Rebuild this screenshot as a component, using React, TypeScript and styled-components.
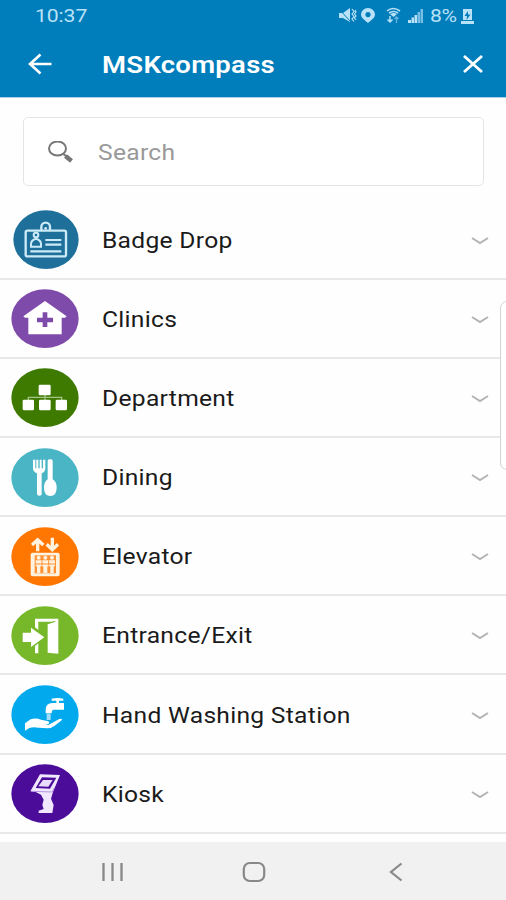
import React from "react";
import styled, { createGlobalStyle } from "styled-components";

const GlobalStyle = createGlobalStyle`
  * { box-sizing: border-box; }
  body { margin: 0; background: #fff; font-family: Roboto, "Liberation Sans", sans-serif; }
  svg { display: block; flex: none; }
`;

const Screen = styled.div`
  position: relative;
  width: 506px;
  height: 900px;
  display: flex;
  flex-direction: column;
  overflow: hidden;
  background: #fefefe;
`;

const Header = styled.header`
  height: 98px;
  flex: none;
  background: #007dbb;
  color: #fff;
  border-bottom: 1px solid #a9cfe5;
`;

const StatusBar = styled.div`
  height: 32px;
  display: flex;
  align-items: center;
  justify-content: space-between;
  padding: 0 32px 0 35px;
  color: #b9e2f8;
`;

const StatusIcons = styled.div`
  display: flex;
  align-items: center;
`;

const Label = styled.span<{ $size: number; $weight?: number; $spacing?: number; $color?: string }>`
  display: block;
  white-space: nowrap;
  transform: scaleX(1.145);
  transform-origin: left center;
  font-size: ${(p) => p.$size}px;
  line-height: 30px;
  font-weight: ${(p) => p.$weight ?? 400};
  letter-spacing: ${(p) => p.$spacing ?? 0}px;
  color: ${(p) => p.$color ?? "inherit"};
`;

const Battery = styled.div`
  width: 37px;
  padding-left: 6px;
`;

const TitleBar = styled.div`
  height: 65px;
  display: flex;
  align-items: center;
  padding: 0 22px 1px 27px;
`;

const Title = styled.h1`
  margin: 0 auto 0 50px;
  padding-top: 2px;
  font: inherit;
`;

const SearchBox = styled.div`
  height: 69px;
  margin: 19px 22px 0 23px;
  flex: none;
  display: flex;
  align-items: center;
  gap: 24px;
  padding: 2px 0 0 23px;
  border: 1.5px solid #e5e5e5;
  border-radius: 5px;
  background: #fff;
`;

const List = styled.ul`
  list-style: none;
  margin: 14.9px 0 0;
  padding: 0;
  flex: 1;
`;

const Row = styled.li`
  height: 79.1px;
  display: flex;
  align-items: center;
  padding: 1px 16px 0 11px;
  border-bottom: 2px solid #e8e8e8;
`;

const RowName = styled.div`
  flex: 1;
  margin-left: 22.5px;
  padding-top: 2px;
`;

const EdgeHandle = styled.div`
  position: absolute;
  right: -8px;
  top: 301px;
  width: 14px;
  height: 169px;
  border: 1.5px solid #d4d4d4;
  border-radius: 8px;
  background: #fefefe;
`;

const NavBar = styled.nav`
  height: 58px;
  flex: none;
  display: flex;
  align-items: center;
  padding: 2px 0 0 101px;
  gap: 118px;
  background: #f1f1f1;
`;

const Disc = ({ color, offset = 0, children }: { color: string; offset?: number; children: React.ReactNode }) => (
  <svg width="68" height="59.33" viewBox="-102 -89 204 178">
    <ellipse cx={offset} rx={101 - offset} ry="88" fill={color} />
    {children}
  </svg>
);

const BadgeIcon = () => (
  <Disc color="#1e709b" offset={3}>
    <g fill="none" stroke="#cceaf8" strokeWidth="7">
      <path d="M-11-28V-38A13 13 0 0 1 15-38V-28" />
      <rect x="-58" y="-27" width="121" height="77" rx="5" />
      <circle cx="-27" cy="-14" r="7" strokeWidth="6" />
      <path d="M-42 21V13Q-42 1-27-3Q-12 1-12 13V21Z" strokeWidth="6" />
      <path d="M1 1H49M1 15H49M-44 35H49" strokeWidth="6.5" />
    </g>
    <circle cx="2" cy="-34" r="4" fill="#cceaf8" />
  </Disc>
);

const ClinicIcon = () => (
  <Disc color="#7f4bab">
    <path d="M0-53L65-7L60-3H50V47H-50V-3H-60L-65-7Z" fill="#fff" />
    <path d="M0-19V25M-24 4H24" stroke="#7f4bab" strokeWidth="14" />
  </Disc>
);

const DepartmentIcon = () => (
  <Disc color="#3e7a00">
    <path d="M0-8V8M-50 8V-1H50V8" fill="none" stroke="#a5c486" strokeWidth="4" />
    <g fill="#fff">
      <rect x="-19" y="-39" width="36" height="32" rx="4" />
      <rect x="-67" y="6" width="34" height="32" rx="4" />
      <rect x="-18" y="6" width="35" height="32" rx="4" />
      <rect x="32" y="6" width="34" height="32" rx="4" />
    </g>
  </Disc>
);

const DiningIcon = () => (
  <Disc color="#49b5c5">
    <g fill="#fff">
      <path d="M-36-54H-29V-28H-26V-54H-20V-28H-16V-54H-10V-28H-6V-54H1V-28Q1-17-10-13V50Q-10 54-17 54Q-24 54-24 50V-13Q-36-17-36-28Z" />
      <path d="M8-51Q8-55 16-55Q23-55 23-51V5Q35 12 35 30Q35 55 16 55Q-3 55-3 30Q-3 12 8 5Z" />
    </g>
  </Disc>
);

const ElevatorIcon = () => (
  <Disc color="#ff7600">
    <g fill="none" stroke="#fff3df" strokeWidth="10">
      <path d="M-22-16V-50M-39-35L-22-51L-5-35" />
      <path d="M22-57V-23M5-37L22-21L39-37" />
    </g>
    <rect x="-43" y="-12" width="87" height="71" rx="6" fill="#fff3df" />
    <path d="M-31-4H33V50H-31Z" fill="#ff9234" />
    <g fill="#fff3df">
      <circle cx="-19" cy="3" r="6" /><circle cx="1" cy="3" r="6" /><circle cx="21" cy="3" r="6" />
      <path d="M-28 11H30V29H26V49H16V29H7V49H-5V29H-14V49H-24V29H-28Z" />
    </g>
    <path d="M-9 11V27M11 11V27M-31 22H33" stroke="#ff9234" strokeWidth="3" />
  </Disc>
);

const EntranceIcon = () => (
  <Disc color="#76b82a">
    <g fill="#fff">
      <path d="M-30-51H40V54L8 51V-35L28-42H-20V-17L-30-25ZM-30 31L-20 23V53H-30Z" />
      <path d="M-67-9H-42V-24L-2 5L-42 34V19H-67Z" />
    </g>
    <path d="M8-36L31-43" stroke="#76b82a" strokeWidth="3" />
  </Disc>
);

const WashIcon = () => (
  <Disc color="#03a9ed">
    <g fill="#fff">
      <path d="M20-48Q38-52 55-48V-42H42V-35H57V-15H26Q20-15 20-4H2V-14Q2-35 22-35H34V-42H20Z" />
      <path d="M-60 26L-43 14Q-28 9-12 15L10 20Q18 28 3 30L-12 29L10 31L43 13Q51 10 51 16L29 33Q19 41 7 41L-20 39Q-35 36-47 40L-60 48Z" />
    </g>
    <rect x="5" y="-3" width="12" height="19" fill="#a3dcfa" />
  </Disc>
);

const KioskIcon = () => (
  <Disc color="#4a0c99">
    <path d="M-15-58L45-56L24-5L18 15L26 34L22 58H-19V51L-4 46L-8 34L-4 18L-12 3L-28-5L-44-7Z" fill="#f1e8ff" />
    <path d="M-9-49L34-48L15-15L-28-17Z" fill="#4a0c99" />
    <path d="M-6-41L23-41L10-21L-20-22Z" fill="#e8dbfb" />
    <path d="M-40-7L22-5L28-19" fill="none" stroke="#b595df" strokeWidth="3" />
  </Disc>
);

const places = [
  { name: "Badge Drop", Icon: BadgeIcon },
  { name: "Clinics", Icon: ClinicIcon },
  { name: "Department", Icon: DepartmentIcon },
  { name: "Dining", Icon: DiningIcon },
  { name: "Elevator", Icon: ElevatorIcon },
  { name: "Entrance/Exit", Icon: EntranceIcon },
  { name: "Hand Washing Station", Icon: WashIcon },
  { name: "Kiosk", Icon: KioskIcon },
];

const StatusGlyphs = () => (
  <svg width="86" height="18" viewBox="0 0 86 18" fill="#b9e2f8">
    <path d="M1 6H5L12 1V15L5 11H1Z" />
    <path d="M1 2L13 15" stroke="#007dbb" strokeWidth="1" />
    <path d="M14 2L16 4.5L14 7L16 9.5L14 12L16 14.5M17 3L18 5L16.5 7L18 9L16.5 11L18 13" fill="none" stroke="#b9e2f8" strokeWidth="1.2" />
    <path fillRule="evenodd" d="M30 1A7 6.4 0 0 1 37 7.5C37 11 33 13 30 16C27 13 23 11 23 7.5A7 6.4 0 0 1 30 1ZM30 5A2.6 2.6 0 1 0 30 10.2A2.6 2.6 0 1 0 30 5Z" />
    <path d="M49 4Q55-1 62 4M51 6Q55.5 3 60 6" fill="none" stroke="#b9e2f8" strokeWidth="1.6" />
    <path d="M52 7Q55.5 5 59 7L55.5 10Z" />
    <path d="M52 9V15M49.5 12.5L52 15L54.5 12.5" fill="none" stroke="#b9e2f8" strokeWidth="1.5" />
    <path d="M58.5 16V10M56.5 12L58.5 10L60.5 12" fill="none" stroke="#66b4df" strokeWidth="1.3" />
    <path d="M70 13H73V16H70ZM73.5 10.5H76V16H73.5ZM76.5 8H79V16H76.5Z" />
    <path d="M79.5 5H82V16H79.5ZM82.5 2H85V16H82.5Z" fill="#79bfe5" />
  </svg>
);

export default function App() {
  return (
    <Screen>
      <GlobalStyle />
      <Header>
        <StatusBar>
          <Label $size={18.5} $spacing={-0.1}>10:37</Label>
          <StatusIcons>
            <StatusGlyphs />
            <Battery>
              <Label $size={18.5} $spacing={-0.3}>8%</Label>
            </Battery>
            <svg width="13" height="17" viewBox="0 0 13 17" fill="#b9e2f8">
              <path d="M2 1H11V12H2ZM0 13H13V16H0Z" />
              <path d="M7 3L3.5 8H6L5.5 12L9.5 6.5H7Z" fill="#007dbb" />
            </svg>
          </StatusIcons>
        </StatusBar>
        <TitleBar>
          <svg width="25" height="24" viewBox="0 0 25 24" fill="none" stroke="#fff" strokeWidth="2.6">
            <path d="M24.5 12H3M13.5 2.5L3 12L13.5 21.5" />
          </svg>
          <Title>
            <Label $size={24} $weight={600} $spacing={0.25}>MSKcompass</Label>
          </Title>
          <svg width="22" height="20" viewBox="0 0 22 20" fill="none" stroke="#fff" strokeWidth="2.8">
            <path d="M2 2L20 18M20 2L2 18" />
          </svg>
        </TitleBar>
      </Header>
      <SearchBox>
        <svg width="27" height="24" viewBox="0 0 27 24" fill="none" stroke="#777">
          <ellipse cx="10.5" cy="7.5" rx="8.5" ry="7" strokeWidth="2" />
          <path d="M16.5 13L20 16" strokeWidth="2" />
          <path d="M18.5 15L24.5 20" strokeWidth="4.5" />
        </svg>
        <Label $size={21.5} $spacing={0.25} $color="#999">Search</Label>
      </SearchBox>
      <List>
        {places.map(({ name, Icon }) => (
          <Row key={name}>
            <Icon />
            <RowName>
              <Label $size={21.5} $spacing={0.25} $color="#1a1a1a">{name}</Label>
            </RowName>
            <svg width="20" height="12" viewBox="0 0 20 12" fill="none" stroke="#b3b3b3" strokeWidth="2">
              <path d="M2 4L10 9L18 4" />
            </svg>
          </Row>
        ))}
      </List>
      <NavBar>
        <svg width="23" height="20" viewBox="0 0 23 20" stroke="#888" strokeWidth="2.3">
          <path d="M2.5 1V19M11.5 1V19M20.5 1V19" />
        </svg>
        <svg width="24" height="22" viewBox="0 0 24 22" fill="none" stroke="#888" strokeWidth="2.2">
          <rect x="1.8" y="2" width="20.4" height="18" rx="6" />
        </svg>
        <svg width="38" height="20" viewBox="0 0 38 20" fill="none" stroke="#888" strokeWidth="2.2">
          <path d="M17.5 1.5L7 10L17.5 18.5" />
        </svg>
      </NavBar>
      <EdgeHandle />
    </Screen>
  );
}
